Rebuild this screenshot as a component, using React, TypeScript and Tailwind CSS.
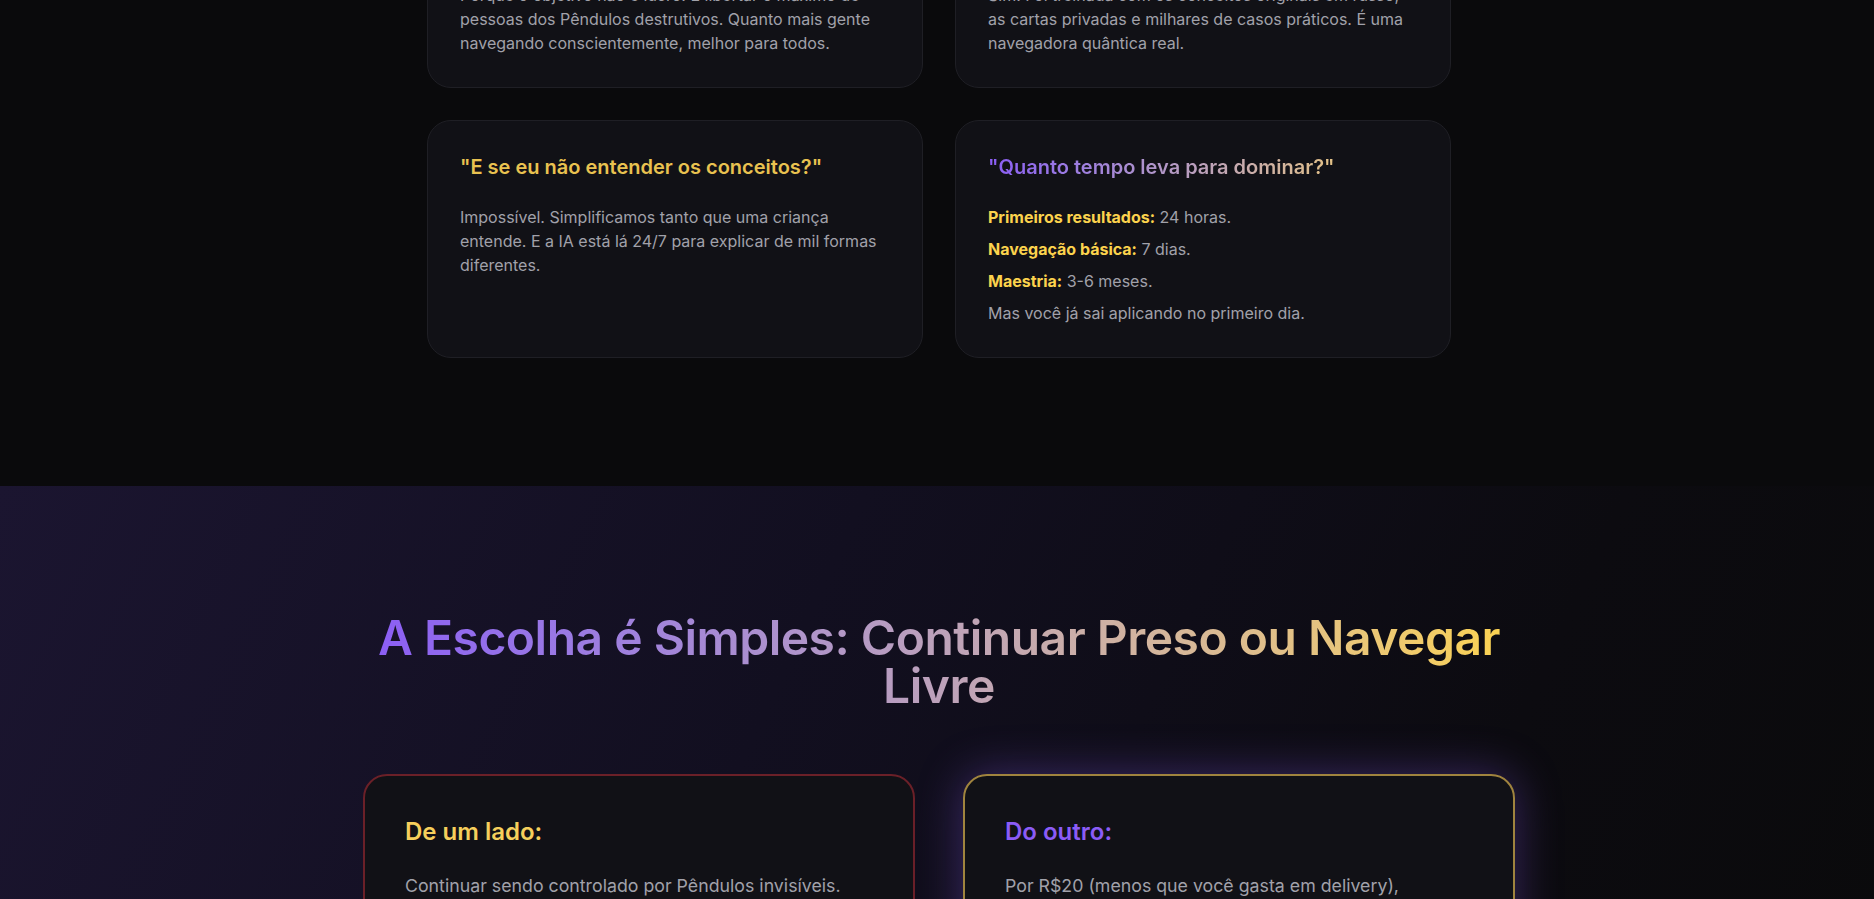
export default function App() {
  const faqs = [
    {
      q: '"Por que é tão barato?"',
      tone: "yellow",
      body: "Porque o objetivo não é lucro. É libertar o máximo de pessoas dos Pêndulos destrutivos. Quanto mais gente navegando conscientemente, melhor para todos.",
    },
    {
      q: '"A IA realmente conhece o Transurfing?"',
      tone: "gradient",
      body: "Sim. Foi treinada com os conceitos originais em russo, as cartas privadas e milhares de casos práticos. É uma navegadora quântica real.",
    },
  ];

  const timeline = [
    { label: "Primeiros resultados:", value: "24 horas." },
    { label: "Navegação básica:", value: "7 dias." },
    { label: "Maestria:", value: "3-6 meses." },
  ];

  return (
    <div className="min-h-screen overflow-hidden bg-[#0a0a0c] font-['Inter',sans-serif]">
      {/* FAQ */}
      <section className="px-6 pb-32">
        <div className="max-w-5xl mx-auto -mt-[102px] translate-x-[2px] grid grid-cols-2 gap-8">
          {faqs.map((f, i) => (
            <div key={i} className="rounded-3xl border border-[#1f1f25] bg-[#111116] p-8">
              <h3
                className={
                  f.tone === "yellow"
                    ? "text-xl font-semibold text-[#e9c250] mb-6"
                    : "text-xl font-semibold mb-6 bg-gradient-to-r from-[#8b5cf6] to-[#fcd34d] bg-clip-text text-transparent"
                }
              >
                {f.q}
              </h3>
              <p className="text-base leading-6 text-[#a1a1aa]">{f.body}</p>
            </div>
          ))}

          <div className="rounded-3xl border border-[#1f1f25] bg-[#111116] p-8">
            <h3 className="text-xl font-semibold text-[#e9c250] mb-6">"E se eu não entender os conceitos?"</h3>
            <p className="text-base leading-6 text-[#a1a1aa]">
              Impossível. Simplificamos tanto que uma criança entende. E a IA está lá 24/7 para explicar de mil formas
              diferentes.
            </p>
          </div>

          <div className="rounded-3xl border border-[#1f1f25] bg-[#111116] p-8">
            <h3 className="text-xl font-semibold mb-6 bg-gradient-to-r from-[#8b5cf6] to-[#fcd34d] bg-clip-text text-transparent">
              "Quanto tempo leva para dominar?"
            </h3>
            <div className="space-y-2 text-base leading-6 text-[#a1a1aa]">
              {timeline.map((t) => (
                <p key={t.label}>
                  <span className="font-bold text-[#fcd34d]">{t.label}</span> {t.value}
                </p>
              ))}
              <p>Mas você já sai aplicando no primeiro dia.</p>
            </div>
          </div>
        </div>
      </section>

      {/* A escolha */}
      <section className="px-6 py-32 bg-[linear-gradient(115deg,#1b1530_0%,#120f20_40%,#0c0b10_75%,#0a0a0b_100%)]">
        <div className="max-w-6xl mx-auto translate-x-[2px]">
          <h2 className="text-5xl leading-none font-semibold tracking-[-0.5px] text-center bg-gradient-to-r from-[#8b5cf6] to-[#fcd34d] bg-clip-text text-transparent mb-16">
            A Escolha é Simples: Continuar Preso ou Navegar Livre
          </h2>

          <div className="grid grid-cols-2 gap-12">
            <div className="rounded-3xl border-2 border-[#6b2028] bg-[#111116] p-10">
              <h3 className="text-2xl font-semibold text-[#f6cf5c] mb-6">De um lado:</h3>
              <p className="text-[17.75px] leading-7 text-[#a1a1aa]">
                Continuar sendo controlado por Pêndulos invisíveis. Repetir os mesmos padrões, as mesmas frustrações,
                o mesmo cenário de sempre.
              </p>
            </div>
            <div className="rounded-3xl border-2 border-[#a0843e] bg-[#111116] p-10 shadow-[0_0_45px_rgba(139,92,246,0.35)]">
              <h3 className="text-2xl font-semibold text-[#8b5cf6] mb-6">Do outro:</h3>
              <p className="text-[17.75px] leading-7 text-[#a1a1aa]">
                Por R$20 (menos que você gasta em delivery), desbloquear a navegadora quântica que te mostra as linhas
                da realidade onde você já é livre.
              </p>
            </div>
          </div>
        </div>
      </section>
    </div>
  );
}
